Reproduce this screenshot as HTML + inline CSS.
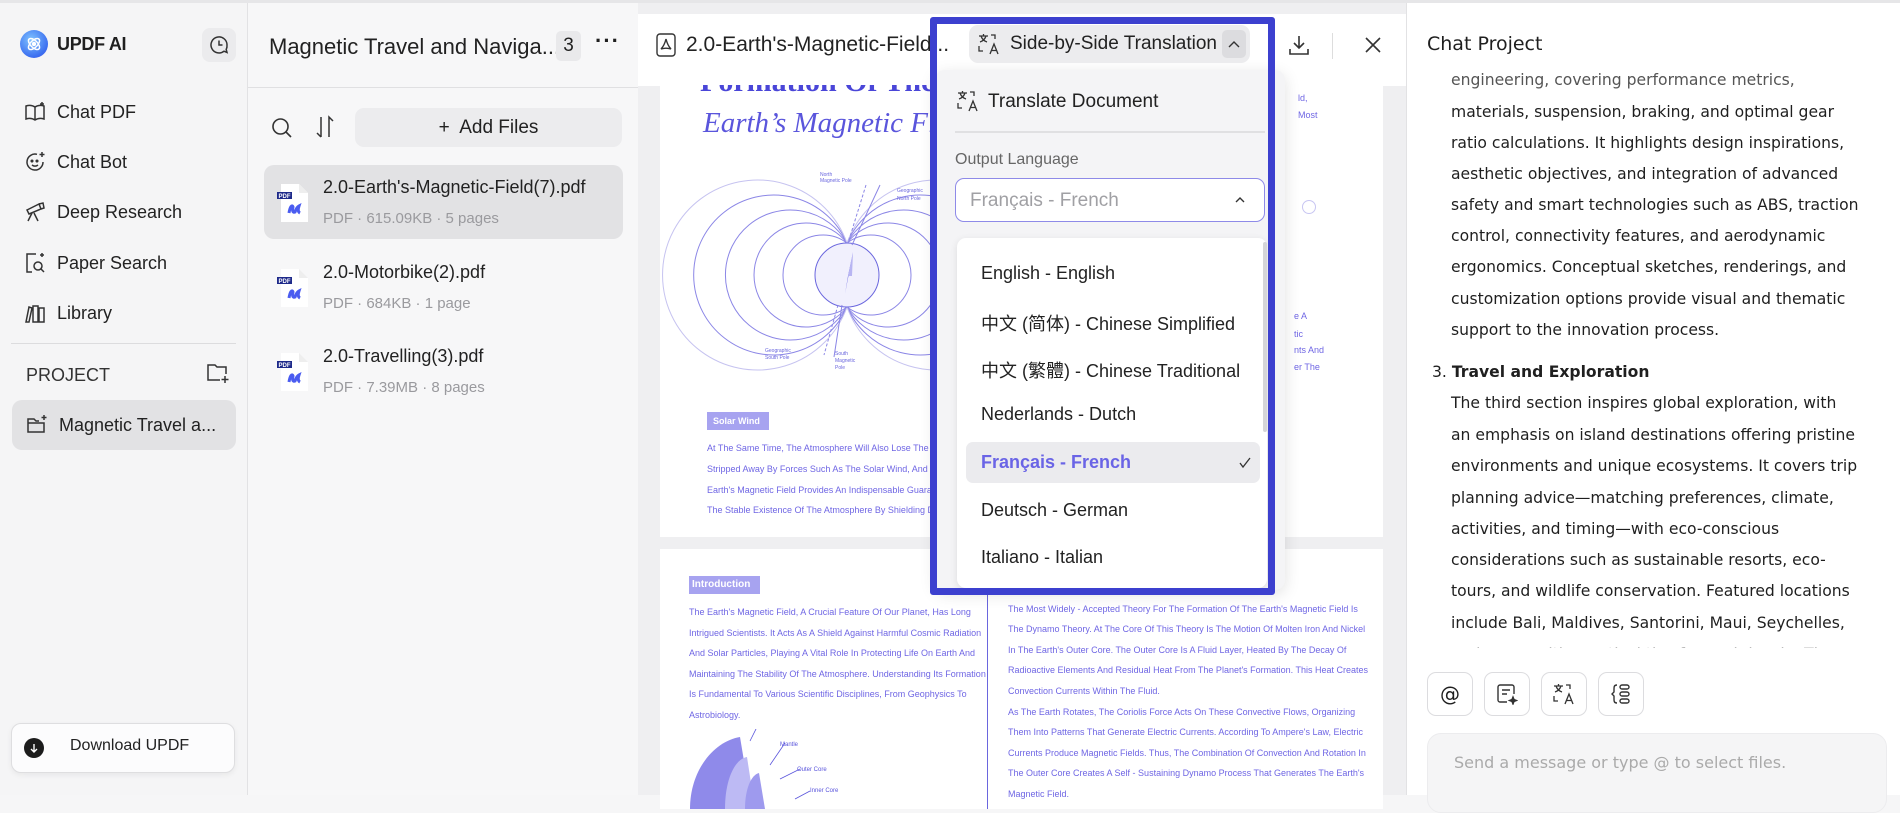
<!DOCTYPE html>
<html><head><meta charset="utf-8">
<style>
*{box-sizing:border-box;margin:0;padding:0}
body{width:1900px;height:795px;overflow:hidden;position:relative;background:#f6f6f7;font-family:"Liberation Sans","Noto Sans CJK SC",sans-serif;color:#1f1f1f}
.a{position:absolute}
.side{left:0;top:0;width:248px;height:795px;background:#f5f5f6;border-right:1px solid #e2e2e4}
.nav{left:24px;font-size:18px;display:flex;align-items:center;gap:11px;color:#222}
.nav svg{width:22px;height:22px}
.files{left:248px;top:0;width:390px;height:795px;background:#f7f7f8}
.fname{font-size:18px;color:#222}
.fmeta{font-size:15px;color:#9a9a9e}
.doc{left:638px;top:0;width:768px;height:795px;background:#efeff1}
.right{left:1406px;top:0;width:494px;height:795px;background:#fff;border-left:1px solid #e2e2e4}
.ct{font-family:"DejaVu Sans",sans-serif;font-size:15.6px;color:#1f1f1f;left:44px;white-space:nowrap}
.pt{font-size:9px;color:#6f66e4;white-space:nowrap;font-family:"Liberation Sans",sans-serif}
.lang{left:0;font-size:18px;color:#222;white-space:nowrap}
.tb{width:46px;height:44px;border:1px solid #dcdcdf;border-radius:9px;top:672px;display:flex;align-items:center;justify-content:center;background:#fff}
</style></head><body>
<div class="a" style="left:0;top:0;width:1900px;height:3px;background:#e6e6e8;z-index:5"></div>

<!-- Sidebar -->
<div class="a side">
  <div class="a" style="left:20px;top:30px;width:28px;height:28px;border-radius:50%;background:radial-gradient(circle at 40% 35%,#7fc3ff,#3b6ef0 70%,#5a4ee8)"></div>
  <svg class="a" style="left:25px;top:35px" width="18" height="18" viewBox="0 0 18 18" fill="none" stroke="#fff" stroke-width="1.5"><ellipse cx="9" cy="9" rx="7" ry="3.5" transform="rotate(45 9 9)"/><ellipse cx="9" cy="9" rx="7" ry="3.5" transform="rotate(-45 9 9)"/><circle cx="9" cy="9" r="1.5" fill="#fff"/></svg>
  <div class="a" style="left:57px;top:34px;font-size:18px;font-weight:bold;letter-spacing:-0.3px">UPDF AI</div>
  <div class="a" style="left:202px;top:28px;width:34px;height:34px;border-radius:8px;background:#ebebed"></div>
  <svg class="a" style="left:208px;top:34px" width="22" height="22" viewBox="0 0 22 22" fill="none" stroke="#333" stroke-width="1.5"><path d="M19 11a8 8 0 1 0-3 6.2l3 1.3-.8-3A8 8 0 0 0 19 11z"/><path d="M11 6.5V11h3.5"/></svg>

  <div class="a nav" style="top:101px"><svg viewBox="0 0 22 22" fill="none" stroke="#333" stroke-width="1.5"><path d="M2 5c3-1 6-1 9 1 3-2 6-2 9-1v13c-3-1-6-1-9 1-3-2-6-2-9-1z"/><path d="M11 6v13"/><path d="M18 1v4M16 3h4"/></svg>Chat PDF</div>
  <div class="a nav" style="top:151px"><svg viewBox="0 0 22 22" fill="none" stroke="#333" stroke-width="1.5"><path d="M19 11a8 8 0 1 1-6-7.7"/><circle cx="8" cy="10" r=".8" fill="#333"/><circle cx="13" cy="10" r=".8" fill="#333"/><path d="M8 14c2 1.5 4 1.5 6 0"/><path d="M18 1v5M15.5 3.5h5"/></svg>Chat Bot</div>
  <div class="a nav" style="top:201px"><svg viewBox="0 0 22 22" fill="none" stroke="#333" stroke-width="1.5"><path d="M3 9l12-6 2 5-12 5z"/><path d="M15 3l4-1 1 5-3 1"/><path d="M8 12l-4 8M10 12l4 8"/></svg>Deep Research</div>
  <div class="a nav" style="top:252px"><svg viewBox="0 0 22 22" fill="none" stroke="#333" stroke-width="1.5"><path d="M12 2H3v18h5"/><circle cx="14" cy="14" r="4"/><path d="M17 17l3 3"/><path d="M18 1v4M16 3h4"/></svg>Paper Search</div>
  <div class="a nav" style="top:302px"><svg viewBox="0 0 22 22" fill="none" stroke="#333" stroke-width="1.5"><path d="M2 20l3-15 3 1-3 14zM9 4h5v16H9zM15 6h5v14h-5z"/></svg>Library</div>
  <div class="a" style="left:11px;top:343px;width:225px;height:1px;background:#dcdcde"></div>
  <div class="a" style="left:26px;top:365px;font-size:18px;color:#333">PROJECT</div>
  <svg class="a" style="left:206px;top:362px" width="24" height="22" viewBox="0 0 24 22" fill="none" stroke="#333" stroke-width="1.5"><path d="M14 18H2V3h7l2 2h9v7"/><path d="M19 14v7M15.5 17.5h7"/></svg>
  <div class="a" style="left:12px;top:400px;width:224px;height:50px;border-radius:10px;background:#e2e2e4"></div>
  <div class="a nav" style="top:414px;left:26px"><svg viewBox="0 0 22 22" fill="none" stroke="#333" stroke-width="1.5"><path d="M15 18H2V5h6l2 2h3"/><path d="M2 9h16v9h-3"/><path d="M18 1v5M15.5 3.5h5"/></svg>Magnetic Travel a...</div>
  <div class="a" style="left:11px;top:723px;width:224px;height:50px;border-radius:10px;background:#fcfcfd;border:1px solid #dedee0;box-shadow:0 2px 6px rgba(0,0,0,.06)"></div>
  <div class="a" style="left:24px;top:738px;width:20px;height:20px;border-radius:50%;background:#1c1c1c"></div>
  <svg class="a" style="left:28px;top:742px" width="12" height="12" viewBox="0 0 12 12" fill="none" stroke="#fff" stroke-width="1.4"><path d="M6 2v8M3 7l3 3 3-3"/></svg>
  <div class="a" style="left:70px;top:737px;font-size:16px;color:#222">Download UPDF</div>
</div>

<!-- Files panel -->
<div class="a files">
  <div class="a" style="left:21px;top:34px;font-size:22px;color:#222;white-space:nowrap">Magnetic Travel and Naviga...</div>
  <div class="a" style="left:308px;top:31px;width:25px;height:30px;border-radius:5px;background:#e9e9eb;font-size:19px;text-align:center;line-height:30px">3</div>
  <div class="a" style="left:347px;top:28px;font-size:22px;font-weight:bold;letter-spacing:1px">···</div>
  <div class="a" style="left:0;top:87px;width:390px;height:1px;background:#e0e0e2"></div>
  <svg class="a" style="left:22px;top:116px" width="24" height="24" viewBox="0 0 24 24" fill="none" stroke="#333" stroke-width="1.6"><circle cx="10.5" cy="10.5" r="7.5"/><path d="M16 16l5 5"/></svg>
  <svg class="a" style="left:66px;top:115px" width="22" height="24" viewBox="0 0 22 24" fill="none" stroke="#333" stroke-width="1.5"><path d="M7 2v20M3 18l4 4M15 22V2l4 4"/></svg>
  <div class="a" style="left:107px;top:108px;width:267px;height:39px;border-radius:9px;background:#ececee;font-size:19px;text-align:center;line-height:39px;color:#222">+&nbsp; Add Files</div>
  <div class="a" style="left:16px;top:165px;width:359px;height:74px;border-radius:10px;background:#e2e2e4"></div>
  <div class="a" style="left:29px;top:183px">
    <svg width="34" height="40" viewBox="0 0 34 40"><path d="M4 1h18l9 9v29H4z" fill="#fff"/><path d="M22 1v9h9" fill="#eee"/><rect x="0" y="9" width="15" height="7" fill="#1e2a8a"/><text x="1.5" y="15" font-size="6" fill="#fff" font-family="Liberation Sans" font-weight="bold">PDF</text><path d="M12 30c1-6 3-9 4-6-1 4 0 6 2 5 1-3 2-5 4-6-1 3-1 6 1 7" fill="none" stroke="#4a5cf0" stroke-width="3"/></svg>
  </div>
  <div class="a fname" style="left:75px;top:177px">2.0-Earth's-Magnetic-Field(7).pdf</div>
  <div class="a fmeta" style="left:75px;top:210px">PDF · 615.09KB · 5 pages</div>
  <div class="a" style="left:29px;top:268px">
    <svg width="34" height="40" viewBox="0 0 34 40"><path d="M4 1h18l9 9v29H4z" fill="#fff"/><path d="M22 1v9h9" fill="#eee"/><rect x="0" y="9" width="15" height="7" fill="#1e2a8a"/><text x="1.5" y="15" font-size="6" fill="#fff" font-family="Liberation Sans" font-weight="bold">PDF</text><path d="M12 30c1-6 3-9 4-6-1 4 0 6 2 5 1-3 2-5 4-6-1 3-1 6 1 7" fill="none" stroke="#4a5cf0" stroke-width="3"/></svg>
  </div>
  <div class="a fname" style="left:75px;top:262px">2.0-Motorbike(2).pdf</div>
  <div class="a fmeta" style="left:75px;top:295px">PDF · 684KB · 1 page</div>
  <div class="a" style="left:29px;top:352px">
    <svg width="34" height="40" viewBox="0 0 34 40"><path d="M4 1h18l9 9v29H4z" fill="#fff"/><path d="M22 1v9h9" fill="#eee"/><rect x="0" y="9" width="15" height="7" fill="#1e2a8a"/><text x="1.5" y="15" font-size="6" fill="#fff" font-family="Liberation Sans" font-weight="bold">PDF</text><path d="M12 30c1-6 3-9 4-6-1 4 0 6 2 5 1-3 2-5 4-6-1 3-1 6 1 7" fill="none" stroke="#4a5cf0" stroke-width="3"/></svg>
  </div>
  <div class="a fname" style="left:75px;top:346px">2.0-Travelling(3).pdf</div>
  <div class="a fmeta" style="left:75px;top:379px">PDF · 7.39MB · 8 pages</div>
</div>

<!-- Document viewer -->
<div class="a doc">
  <div class="a" style="left:0;top:14px;width:768px;height:72px;background:#fff"></div>
  <svg class="a" style="left:18px;top:33px" width="20" height="24" viewBox="0 0 20 24" fill="none" stroke="#333" stroke-width="1.4"><rect x="1" y="1" width="18" height="22" rx="3"/><path d="M10 6c-1 4-3 8-5 10 3-1 7-1 10 0-2-2-4-6-5-10z"/></svg>
  <div class="a" style="left:48px;top:33px;font-size:21px;color:#222;white-space:nowrap">2.0-Earth's-Magnetic-Field...</div>
  <svg class="a" style="left:650px;top:34px" width="22" height="22" viewBox="0 0 22 22" fill="none" stroke="#333" stroke-width="1.6"><path d="M11 2v12M6 9l5 5 5-5M2 15v5h18v-5"/></svg>
  <div class="a" style="left:694px;top:33px;width:1px;height:26px;background:#ddd"></div>
  <svg class="a" style="left:726px;top:36px" width="18" height="18" viewBox="0 0 18 18" stroke="#333" stroke-width="1.6"><path d="M2 2l14 14M16 2L2 16"/></svg>

  <!-- page 1 -->
  <div class="a" style="left:22px;top:85px;width:723px;height:452px;background:#fff;overflow:hidden">
    <div class="a" style="left:40px;top:-20px;font-family:'Liberation Serif',serif;font-weight:bold;font-size:30px;color:#4a46d8;white-space:nowrap">Formation Of The</div>
    <div class="a" style="left:43px;top:22px;font-family:'Liberation Serif',serif;font-style:italic;font-size:29px;color:#5a55dc;white-space:nowrap">Earth’s Magnetic Field</div>
    <svg class="a" style="left:0;top:80px" width="723" height="260" viewBox="660 165 723 260" fill="none" stroke="#8b86e6" stroke-width="1">
      <g>
        <path d="M847 243A40 40 0 1 0 847 307"/>
        <path d="M847 243A52 52 0 1 0 847 307"/>
        <path d="M847 243A65 65 0 1 0 847 307"/>
        <path d="M847 243A80 80 0 1 0 847 307"/>
        <path d="M847 243A95 95 0 1 0 847 307" stroke="#c6c3f0"/>
        <path d="M847 243A40 40 0 1 1 847 307"/>
        <path d="M847 243A52 52 0 1 1 847 307"/>
        <path d="M847 243A65 65 0 1 1 847 307"/>
        <path d="M847 243A80 80 0 1 1 847 307"/>
        <path d="M847 243A95 95 0 1 1 847 307" stroke="#c6c3f0"/>
      </g>
      <circle cx="847" cy="275" r="32" fill="#f1f0fd" stroke="#6a66de"/>
      <path d="M853 252l-8 42 3-18z" fill="#6560e0" stroke="none"/><path d="M853 252l-5 24 4 0z" fill="#b8b5f2" stroke="none"/>
      <path d="M866 185l-18 58M838 305l-14 50" stroke-dasharray="3 2"/><path d="M880 185l-28 60M842 305l-8 52"/>
      <text x="820" y="176" font-size="5" fill="#6a66de" stroke="none" font-family="Liberation Sans">North</text>
      <text x="820" y="182" font-size="5" fill="#6a66de" stroke="none" font-family="Liberation Sans">Magnetic Pole</text>
      <text x="897" y="192" font-size="5" fill="#6a66de" stroke="none" font-family="Liberation Sans">Geographic</text>
      <text x="897" y="200" font-size="5" fill="#6a66de" stroke="none" font-family="Liberation Sans">North Pole</text>
      <text x="765" y="352" font-size="5" fill="#6a66de" stroke="none" font-family="Liberation Sans">Geographic</text>
      <text x="765" y="359" font-size="5" fill="#6a66de" stroke="none" font-family="Liberation Sans">South Pole</text>
      <text x="835" y="355" font-size="5" fill="#6a66de" stroke="none" font-family="Liberation Sans">South</text>
      <text x="835" y="362" font-size="5" fill="#6a66de" stroke="none" font-family="Liberation Sans">Magnetic</text>
      <text x="835" y="369" font-size="5" fill="#6a66de" stroke="none" font-family="Liberation Sans">Pole</text>
    </svg>
    <div class="a" style="left:47px;top:327px;width:62px;height:18px;background:#a7a3f0;color:#fff;font-size:9px;font-weight:bold;line-height:18px;padding-left:6px">Solar Wind</div>
    <div class="a pt" style="left:47px;top:358px">At The Same Time, The Atmosphere Will Also Lose The Protection Of The Magnetic Field And Be</div>
    <div class="a pt" style="left:47px;top:379px">Stripped Away By Forces Such As The Solar Wind, And Eventually Disappear. Therefore, The</div>
    <div class="a pt" style="left:47px;top:400px">Earth's Magnetic Field Provides An Indispensable Guarantee For The</div>
    <div class="a pt" style="left:47px;top:420px">The Stable Existence Of The Atmosphere By Shielding Dangerous Solar Wind</div>
    <div class="a pt" style="left:638px;top:8px">ld,</div>
    <div class="a pt" style="left:638px;top:25px">Most</div>
    <div class="a" style="left:642px;top:115px;width:14px;height:14px;border-radius:50%;border:1px solid #c8c6f2"></div>
    <div class="a pt" style="left:634px;top:226px">e A</div>
    <div class="a pt" style="left:634px;top:244px">tic</div>
    <div class="a pt" style="left:634px;top:260px">nts And</div>
    <div class="a pt" style="left:634px;top:277px">er The</div>
  </div>

  <!-- page 2 -->
  <div class="a" style="left:22px;top:549px;width:723px;height:260px;background:#fff;overflow:hidden">
    <div class="a" style="left:29px;top:27px;width:71px;height:18px;background:#a7a3f0;color:#fff;font-size:10px;font-weight:bold;line-height:18px;padding-left:3px">Introduction</div>
    <div class="a pt" style="left:29px;top:58px">The Earth's Magnetic Field, A Crucial Feature Of Our Planet, Has Long</div>
    <div class="a pt" style="left:29px;top:79px">Intrigued Scientists. It Acts As A Shield Against Harmful Cosmic Radiation</div>
    <div class="a pt" style="left:29px;top:99px">And Solar Particles, Playing A Vital Role In Protecting Life On Earth And</div>
    <div class="a pt" style="left:29px;top:120px">Maintaining The Stability Of The Atmosphere. Understanding Its Formation</div>
    <div class="a pt" style="left:29px;top:140px">Is Fundamental To Various Scientific Disciplines, From Geophysics To</div>
    <div class="a pt" style="left:29px;top:161px">Astrobiology.</div>
    <div class="a" style="left:327px;top:40px;width:1px;height:230px;background:#6a66de"></div>
    <div class="a pt" style="left:348px;top:55px">The Most Widely - Accepted Theory For The Formation Of The Earth's Magnetic Field Is</div>
    <div class="a pt" style="left:348px;top:75px">The Dynamo Theory. At The Core Of This Theory Is The Motion Of Molten Iron And Nickel</div>
    <div class="a pt" style="left:348px;top:96px">In The Earth's Outer Core. The Outer Core Is A Fluid Layer, Heated By The Decay Of</div>
    <div class="a pt" style="left:348px;top:116px">Radioactive Elements And Residual Heat From The Planet's Formation. This Heat Creates</div>
    <div class="a pt" style="left:348px;top:137px">Convection Currents Within The Fluid.</div>
    <div class="a pt" style="left:348px;top:158px">As The Earth Rotates, The Coriolis Force Acts On These Convective Flows, Organizing</div>
    <div class="a pt" style="left:348px;top:178px">Them Into Patterns That Generate Electric Currents. According To Ampere's Law, Electric</div>
    <div class="a pt" style="left:348px;top:199px">Currents Produce Magnetic Fields. Thus, The Combination Of Convection And Rotation In</div>
    <div class="a pt" style="left:348px;top:219px">The Outer Core Creates A Self - Sustaining Dynamo Process That Generates The Earth's</div>
    <div class="a pt" style="left:348px;top:240px">Magnetic Field.</div>
    <svg class="a" style="left:25px;top:180px" width="160" height="80" viewBox="0 0 160 80"><path d="M5 80C5 40 30 12 55 8l12 72z" fill="#8f8aea"/><path d="M40 80c0-30 10-50 22-52l8 52z" fill="#bdbaf4"/><path d="M60 80c0-20 6-34 14-36l6 36z" fill="#9e9aee"/><path d="M65 12l10-20M85 36l15-22M95 50l20-10M110 70l15-8" stroke="#5a55dc" stroke-width=".8"/><text x="60" y="-2" font-size="6" fill="#5a55dc" font-family="Liberation Sans">Crust</text><text x="95" y="17" font-size="6" fill="#5a55dc" font-family="Liberation Sans">Mantle</text><text x="112" y="42" font-size="6" fill="#5a55dc" font-family="Liberation Sans">Outer Core</text><text x="125" y="63" font-size="6" fill="#5a55dc" font-family="Liberation Sans">Inner Core</text></svg>
  </div>
</div>

<!-- Dropdown popover -->
<div class="a" style="left:935px;top:70px;width:350px;height:520px;background:#f4f4f6;border-radius:10px;box-shadow:0 4px 16px rgba(0,0,0,.12)"></div>
<div class="a" style="left:969px;top:25px;width:281px;height:38px;border-radius:9px;background:#ececee"></div>
<div class="a" style="left:1222px;top:30px;width:24px;height:28px;border-radius:5px;background:#dcdcdf"></div>
<svg class="a" style="left:1228px;top:40px" width="12" height="8" viewBox="0 0 12 8" fill="none" stroke="#333" stroke-width="1.4"><path d="M1 7l5-5 5 5"/></svg>
<svg class="a" style="left:977px;top:32px" width="24" height="24" viewBox="0 0 24 24" fill="none" stroke="#333" stroke-width="1.3"><path d="M2 4h9M6.5 2v2M4 4c1 3 3 5 6 6M9 4c-1 3-3 5-6 6"/><path d="M14 3h4v4"/><path d="M2 14v5h4"/><path d="M13 22l4-10 4 10M14.5 18.5h5"/></svg>
<div class="a" style="left:1010px;top:33px;font-size:19px;color:#222;white-space:nowrap">Side-by-Side Translation</div>
<svg class="a" style="left:956px;top:89px" width="24" height="24" viewBox="0 0 24 24" fill="none" stroke="#333" stroke-width="1.3"><path d="M2 4h9M6.5 2v2M4 4c1 3 3 5 6 6M9 4c-1 3-3 5-6 6"/><path d="M14 3h4v4"/><path d="M2 14v5h4"/><path d="M13 22l4-10 4 10M14.5 18.5h5"/></svg>
<div class="a" style="left:988px;top:91px;font-size:19px;color:#222;white-space:nowrap">Translate Document</div>
<div class="a" style="left:955px;top:131px;width:310px;height:2px;background:#e0e0e2"></div>
<div class="a" style="left:955px;top:151px;font-size:16px;color:#666">Output Language</div>
<div class="a" style="left:955px;top:178px;width:310px;height:44px;border-radius:9px;background:#fff;border:1.5px solid #8e8ae8"></div>
<div class="a" style="left:970px;top:190px;font-size:19px;color:#a0a0a4;white-space:nowrap">Français - French</div>
<svg class="a" style="left:1235px;top:196px" width="10" height="7" viewBox="0 0 10 7" fill="none" stroke="#333" stroke-width="1.4"><path d="M1 6l4-4 4 4"/></svg>
<div class="a" style="left:957px;top:238px;width:310px;height:350px;background:#fff;border-radius:9px;box-shadow:0 2px 8px rgba(0,0,0,.1)">
  <div class="a" style="left:306px;top:4px;width:4px;height:190px;border-radius:2px;background:#d5d5d8"></div>
  <div class="a" style="left:9px;top:204px;width:294px;height:41px;border-radius:7px;background:#ebebee"></div>
  <div class="a lang" style="left:24px;top:25px">English - English</div>
  <div class="a lang" style="left:24px;top:72px">中文 (简体) - Chinese Simplified</div>
  <div class="a lang" style="left:24px;top:119px">中文 (繁體) - Chinese Traditional</div>
  <div class="a lang" style="left:24px;top:166px">Nederlands - Dutch</div>
  <div class="a lang" style="left:24px;top:214px;color:#6a64e6;font-weight:bold">Français - French</div>
  <svg class="a" style="left:282px;top:219px" width="12" height="12" viewBox="0 0 12 12" fill="none" stroke="#333" stroke-width="1.3"><path d="M1 6l3 4 7-9"/></svg>
  <div class="a lang" style="left:24px;top:262px">Deutsch - German</div>
  <div class="a lang" style="left:24px;top:309px">Italiano - Italian</div>
</div>
<!-- Blue highlight -->
<div class="a" style="left:930px;top:17px;width:345px;height:578px;border:7px solid #3c40cf;border-radius:3px"></div>

<!-- Right panel -->
<div class="a right">
  <div class="a" style="left:20px;top:33px;font-family:'DejaVu Sans',sans-serif;font-size:19px;color:#1f1f1f">Chat Project</div>
  <div class="a" style="left:0;top:68px;width:494px;height:580px;overflow:hidden">
    <div class="a ct" style="top:3px;color:#555">engineering, covering performance metrics,</div>
    <div class="a ct" style="top:35px">materials, suspension, braking, and optimal gear</div>
    <div class="a ct" style="top:66px">ratio calculations. It highlights design inspirations,</div>
    <div class="a ct" style="top:97px">aesthetic objectives, and integration of advanced</div>
    <div class="a ct" style="top:128px">safety and smart technologies such as ABS, traction</div>
    <div class="a ct" style="top:159px">control, connectivity features, and aerodynamic</div>
    <div class="a ct" style="top:190px">ergonomics. Conceptual sketches, renderings, and</div>
    <div class="a ct" style="top:222px">customization options provide visual and thematic</div>
    <div class="a ct" style="top:253px">support to the innovation process.</div>
    <div class="a ct" style="top:295px;left:25px">3. <b>Travel and Exploration</b></div>
    <div class="a ct" style="top:326px">The third section inspires global exploration, with</div>
    <div class="a ct" style="top:358px">an emphasis on island destinations offering pristine</div>
    <div class="a ct" style="top:389px">environments and unique ecosystems. It covers trip</div>
    <div class="a ct" style="top:421px">planning advice—matching preferences, climate,</div>
    <div class="a ct" style="top:452px">activities, and timing—with eco-conscious</div>
    <div class="a ct" style="top:483px">considerations such as sustainable resorts, eco-</div>
    <div class="a ct" style="top:514px">tours, and wildlife conservation. Featured locations</div>
    <div class="a ct" style="top:546px">include Bali, Maldives, Santorini, Maui, Seychelles,</div>
    <div class="a ct" style="top:577px;color:#bbb">and more, with practical tips for each locale. The</div>
  </div>
  <div class="a tb" style="left:20px"><span style="font-family:'DejaVu Sans';font-size:20px">@</span></div>
  <div class="a tb" style="left:77px"><svg width="22" height="22" viewBox="0 0 22 22" fill="none" stroke="#333" stroke-width="1.4"><path d="M11 19H4a2 2 0 0 1-2-2V4a2 2 0 0 1 2-2h12a2 2 0 0 1 2 2v7"/><path d="M6 7h8M6 11h5"/><path d="M17 14l1 2.5 2.5 1-2.5 1-1 2.5-1-2.5-2.5-1 2.5-1z" fill="#333"/></svg></div>
  <div class="a tb" style="left:134px"><svg width="24" height="24" viewBox="0 0 24 24" fill="none" stroke="#333" stroke-width="1.3"><path d="M2 4h9M6.5 2v2M4 4c1 3 3 5 6 6M9 4c-1 3-3 5-6 6"/><path d="M14 3h4v4"/><path d="M2 14v5h4"/><path d="M13 22l4-10 4 10M14.5 18.5h5"/></svg></div>
  <div class="a tb" style="left:191px"><svg width="22" height="22" viewBox="0 0 22 22" fill="none" stroke="#333" stroke-width="1.4"><path d="M7 2C4 2 4 4 4 6v3l-2 2 2 2v3c0 2 0 4 3 4"/><rect x="10" y="2" width="9" height="4" rx="2"/><rect x="10" y="9" width="9" height="4" rx="2"/><rect x="10" y="16" width="9" height="4" rx="2"/></svg></div>
  <div class="a" style="left:20px;top:733px;width:460px;height:80px;border-radius:14px;background:#f5f5f6;border:1px solid #ececee"></div>
  <div class="a" style="left:47px;top:753px;font-family:'DejaVu Sans',sans-serif;font-size:16px;color:#aaa;white-space:nowrap">Send a message or type @ to select files.</div>
</div>
</body></html>
